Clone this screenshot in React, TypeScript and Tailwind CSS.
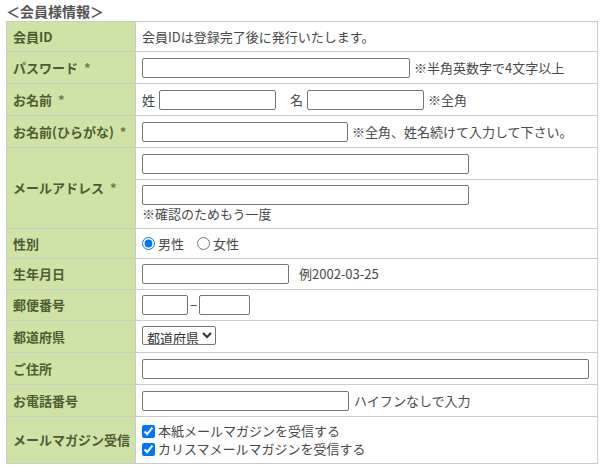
import { ReactNode } from "react"

const font = "font-['Noto_Sans_CJK_JP','Noto_Sans',sans-serif]"
const inputCls =
  "h-[20px] border border-[#767676] rounded-[2px] bg-white px-1 text-[13px] outline-none"

function Label({ children, rowSpan }: { children: ReactNode; rowSpan?: number }) {
  return (
    <th
      rowSpan={rowSpan}
      className="w-[129px] border border-[#cccccc] bg-[#d0e3a6] pl-[6px] text-left align-middle text-[13px] font-bold text-[#4e5c33]"
    >
      {children}
    </th>
  )
}

function Cell({ children, className = "" }: { children: ReactNode; className?: string }) {
  return (
    <td className={`border border-[#cccccc] bg-white pl-[6px] align-middle text-[13px] text-[#484848] ${className}`}>
      {children}
    </td>
  )
}

// small grey asterisk after required labels
const Req = () => <span className="ml-[6px] text-[#6b7a4a]">*</span>

export default function App() {
  return (
    <div className={`w-[603px] h-[467px] bg-white ${font}`}>
      <div className="pl-[6px] pt-[2px] h-[21px] text-[14px] font-bold leading-[18px] text-[#555555]">
        ＜会員様情報＞
      </div>
      <table className="ml-[6px] w-[592px] border-collapse">
        <tbody>
          <tr className="h-[30px]">
            <Label>会員ID</Label>
            <Cell>会員IDは登録完了後に発行いたします。</Cell>
          </tr>
          <tr className="h-[32px]">
            <Label>パスワード<Req /></Label>
            <Cell>
              <div className="flex items-center gap-[4px]">
                <input type="password" className={`${inputCls} w-[268px]`} />
                <span>※半角英数字で4文字以上</span>
              </div>
            </Cell>
          </tr>
          <tr className="h-[32px]">
            <Label>お名前<Req /></Label>
            <Cell>
              <div className="flex items-center">
                <span className="mr-[4px]">姓</span>
                <input className={`${inputCls} w-[117px]`} />
                <span className="ml-[14px] mr-[4px]">名</span>
                <input className={`${inputCls} w-[117px]`} />
                <span className="ml-[4px]">※全角</span>
              </div>
            </Cell>
          </tr>
          <tr className="h-[32px]">
            <Label>お名前(ひらがな)<Req /></Label>
            <Cell>
              <div className="flex items-center gap-[4px]">
                <input className={`${inputCls} w-[206px]`} />
                <span>※全角、姓名続けて入力して下さい。</span>
              </div>
            </Cell>
          </tr>
          <tr className="h-[32px]">
            <Label rowSpan={2}>メールアドレス<Req /></Label>
            <Cell>
              <input className={`${inputCls} w-[327px] block`} />
            </Cell>
          </tr>
          <tr className="h-[49px]">
            <Cell>
              <input className={`${inputCls} w-[327px] block`} />
              <div className="leading-[18px]">※確認のためもう一度</div>
            </Cell>
          </tr>
          <tr className="h-[30px]">
            <Label>性別</Label>
            <Cell>
              <div className="flex items-center">
                <label className="flex items-center gap-[3px]">
                  <input type="radio" name="sex" defaultChecked className="m-0 w-[13px] h-[13px]" />
                  <span>男性</span>
                </label>
                <label className="ml-[13px] flex items-center gap-[3px]">
                  <input type="radio" name="sex" className="m-0 w-[13px] h-[13px]" />
                  <span>女性</span>
                </label>
              </div>
            </Cell>
          </tr>
          <tr className="h-[31px]">
            <Label>生年月日</Label>
            <Cell>
              <div className="flex items-center gap-[10px]">
                <input className={`${inputCls} w-[147px]`} />
                <span>例2002-03-25</span>
              </div>
            </Cell>
          </tr>
          <tr className="h-[31px]">
            <Label>郵便番号</Label>
            <Cell>
              <div className="flex items-center">
                <input className={`${inputCls} w-[46px]`} />
                <span className="mx-[2px]">−</span>
                <input className={`${inputCls} w-[51px]`} />
              </div>
            </Cell>
          </tr>
          <tr className="h-[32px]">
            <Label>都道府県</Label>
            <Cell>
              <select className="h-[19px] w-[74px] border border-[#767676] rounded-[2px] bg-white text-[13px] text-[#333] leading-none">
                <option>都道府県</option>
              </select>
            </Cell>
          </tr>
          <tr className="h-[32px]">
            <Label>ご住所</Label>
            <Cell>
              <input className={`${inputCls} w-[447px]`} />
            </Cell>
          </tr>
          <tr className="h-[32px]">
            <Label>お電話番号</Label>
            <Cell>
              <div className="flex items-center gap-[5px]">
                <input className={`${inputCls} w-[207px]`} />
                <span>ハイフンなしで入力</span>
              </div>
            </Cell>
          </tr>
          <tr className="h-[47px]">
            <Label>メールマガジン受信</Label>
            <Cell>
              <div className="flex flex-col">
                <label className="flex h-[18px] items-center gap-[3px] leading-[18px]">
                  <input type="checkbox" defaultChecked className="m-0 w-[13px] h-[13px]" />
                  <span>本紙メールマガジンを受信する</span>
                </label>
                <label className="flex h-[18px] items-center gap-[3px] leading-[18px]">
                  <input type="checkbox" defaultChecked className="m-0 w-[13px] h-[13px]" />
                  <span>カリスマメールマガジンを受信する</span>
                </label>
              </div>
            </Cell>
          </tr>
        </tbody>
      </table>
    </div>
  )
}
